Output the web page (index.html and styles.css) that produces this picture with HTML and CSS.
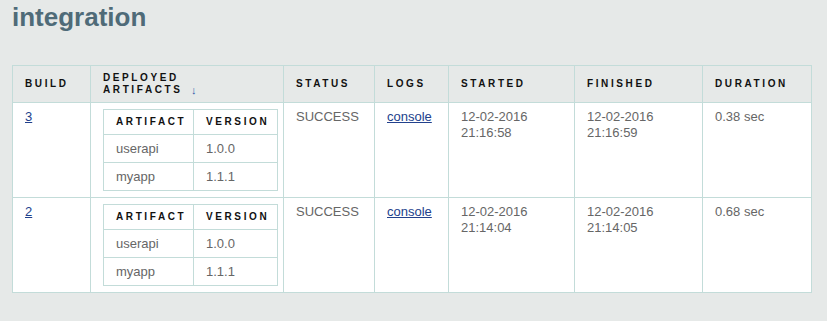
FILE: index.html
```html
<!DOCTYPE html>
<html>
<head>
<meta charset="utf-8">
<title>integration</title>
<link rel="stylesheet" href="styles.css">
</head>
<body>
<div class="page">
  <h1 class="title">integration</h1>
  <table class="builds">
    <colgroup>
      <col class="c-build"><col class="c-art"><col class="c-status"><col class="c-logs"><col class="c-started"><col class="c-finished"><col class="c-duration">
    </colgroup>
    <thead>
      <tr>
        <th>Build</th>
        <th>Deployed<br>Artifacts <span class="sort">↓</span></th>
        <th>Status</th>
        <th>Logs</th>
        <th>Started</th>
        <th>Finished</th>
        <th>Duration</th>
      </tr>
    </thead>
    <tbody>
      <tr>
        <td><a href="#">3</a></td>
        <td>
          <table class="artifacts">
            <colgroup><col class="a-name"><col class="a-ver"></colgroup>
            <thead><tr><th>Artifact</th><th>Version</th></tr></thead>
            <tbody>
              <tr><td>userapi</td><td>1.0.0</td></tr>
              <tr><td>myapp</td><td>1.1.1</td></tr>
            </tbody>
          </table>
        </td>
        <td>SUCCESS</td>
        <td><a href="#">console</a></td>
        <td>12-02-2016<br>21:16:58</td>
        <td>12-02-2016<br>21:16:59</td>
        <td>0.38 sec</td>
      </tr>
      <tr>
        <td><a href="#">2</a></td>
        <td>
          <table class="artifacts">
            <colgroup><col class="a-name"><col class="a-ver"></colgroup>
            <thead><tr><th>Artifact</th><th>Version</th></tr></thead>
            <tbody>
              <tr><td>userapi</td><td>1.0.0</td></tr>
              <tr><td>myapp</td><td>1.1.1</td></tr>
            </tbody>
          </table>
        </td>
        <td>SUCCESS</td>
        <td><a href="#">console</a></td>
        <td>12-02-2016<br>21:14:04</td>
        <td>12-02-2016<br>21:14:05</td>
        <td>0.68 sec</td>
      </tr>
    </tbody>
  </table>
</div>
</body>
</html>
```

FILE: styles.css
```css
html, body {
  margin: 0;
  padding: 0;
  background: #e6e9e8;
}

.page {
  padding: 0 12px;
  font-family: "Liberation Sans", Arial, sans-serif;
}

.title {
  margin: 2px 0 33px;
  font-size: 26px;
  line-height: 30px;
  font-weight: bold;
  color: #4f6b78;
}

.builds {
  width: 800px;
  table-layout: fixed;
  border-collapse: collapse;
  border: 1px solid #c3dcd9;
  background: #ffffff;
}

.c-build { width: 78px; }
.c-art { width: 193px; }
.c-status { width: 91px; }
.c-logs { width: 74px; }
.c-started { width: 126px; }
.c-finished { width: 128px; }
.c-duration { width: 109px; }

.builds th,
.builds td {
  border: 1px solid #c3dcd9;
  padding: 6px 12px;
  text-align: left;
}

.builds th {
  background: #e6e9e8;
  color: #111;
  font-size: 10px;
  line-height: 12px;
  font-weight: bold;
  letter-spacing: 2.6px;
  text-transform: uppercase;
  vertical-align: middle;
  white-space: nowrap;
}

.builds td {
  color: #666;
  font-size: 13px;
  line-height: 16px;
  vertical-align: top;
}

.builds a {
  color: #22418c;
  text-decoration: underline;
}

.sort {
  display: inline-block;
  margin-left: 3px;
  font-size: 11px;
  line-height: 10px;
  height: 10px;
  vertical-align: -1px;
  letter-spacing: 0;
  color: #2f5aa8;
  font-weight: normal;
}

.artifacts {
  width: 175px;
  table-layout: fixed;
  border-collapse: collapse;
  border: 1px solid #c3dcd9;
}

.a-name { width: 90px; }
.a-ver { width: 84px; }

.builds .artifacts th {
  background: #ffffff;
  padding: 6px 12px;
  line-height: 12px;
}

.builds .artifacts td {
  padding: 6px 12px;
  line-height: 15px;
  white-space: nowrap;
}
```
